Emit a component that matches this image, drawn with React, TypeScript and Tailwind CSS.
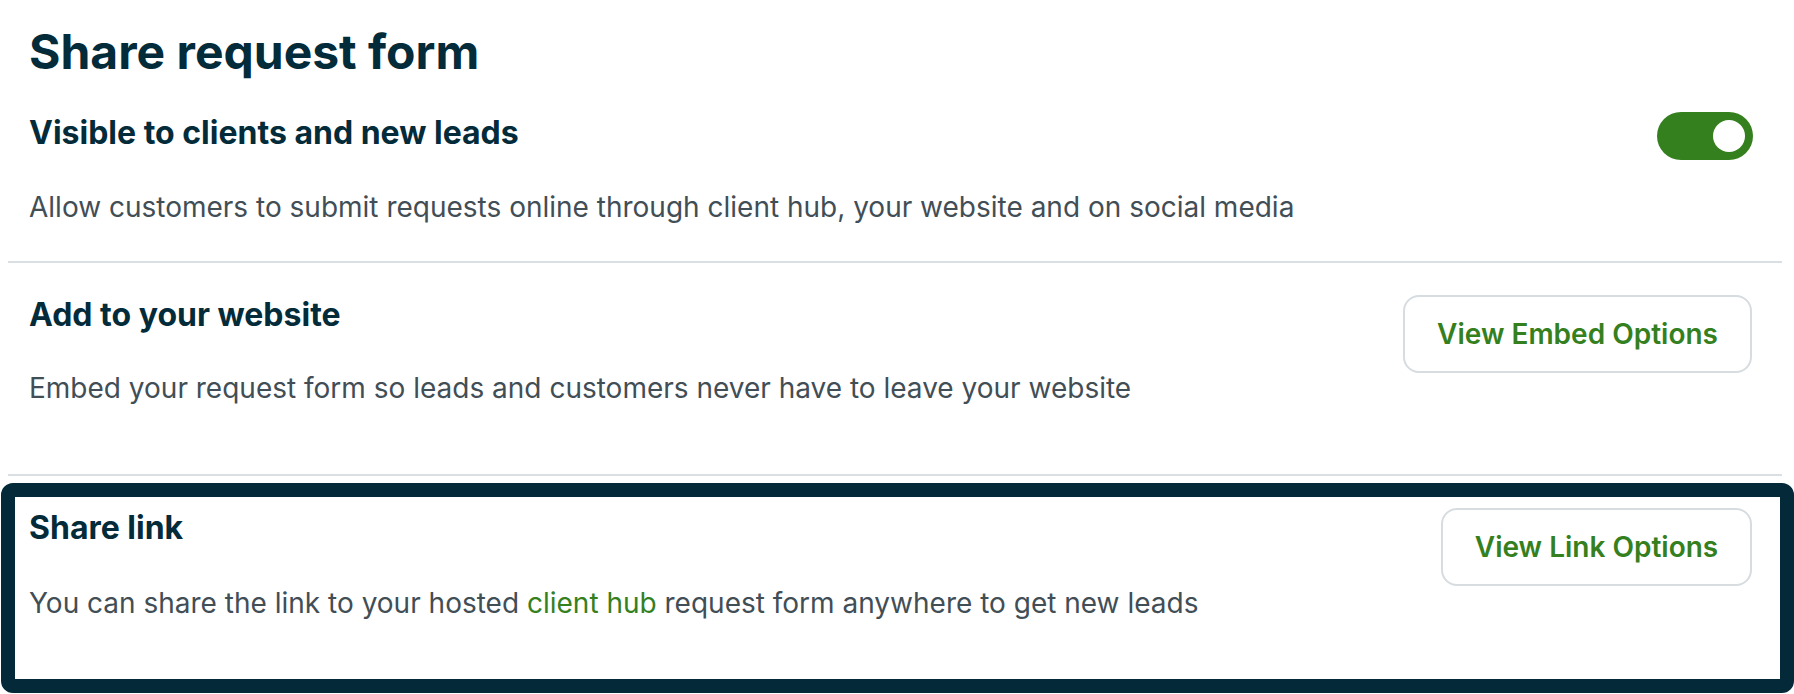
import React from "react";

const GREEN = "#35801e";

function Toggle() {
  return (
    <div className="flex h-[48px] w-[96px] shrink-0 items-center justify-end rounded-full bg-[#35801e] pr-[8px]">
      <div className="h-[32px] w-[32px] rounded-full bg-white" />
    </div>
  );
}

function OptionButton({ label, width }: { label: string; width: string }) {
  return (
    <button
      className={`flex h-[78px] ${width} shrink-0 items-center justify-center rounded-[16px] border-2 border-[#d6dce0] bg-white text-[28px] font-semibold leading-[34px] text-[#35801e]`}
    >
      {label}
    </button>
  );
}

export default function App() {
  return (
    <div
      className="h-[694px] w-[1794px] overflow-hidden bg-white"
      style={{ fontFamily: "Inter, 'Noto Sans', sans-serif" }}
    >
      <div className="pl-[8px] pr-[12px]">
        {/* Section 1 */}
        <div className="pl-[21px] pr-[29px] pt-[23px] pb-[37px]">
          <h1 className="text-[48px] font-bold leading-[58px] text-[#032b3a]">
            Share request form
          </h1>
          <div className="mt-[31px] flex items-start justify-between">
            <h2 className="pt-px text-[32px] font-bold leading-[40px] text-[#032b3a]">
              Visible to clients and new leads
            </h2>
            <Toggle />
          </div>
          <p className="mt-[30px] text-[28px] leading-[34px] text-[#424e56]">
            Allow customers to submit requests online through client hub, your website and on social media
          </p>
        </div>
        <div className="h-[2px] bg-[#dadfe3]" />

        {/* Section 2 */}
        <div className="flex items-start justify-between pl-[21px] pr-[30px] pt-[32px] pb-[69px]">
          <div>
            <h2 className="text-[32px] font-bold leading-[40px] text-[#032b3a]">
              Add to your website
            </h2>
            <p className="mt-[36px] text-[28px] leading-[34px] text-[#424e56]">
              Embed your request form so leads and customers never have to leave your website
            </p>
          </div>
          <OptionButton label="View Embed Options" width="w-[349px]" />
        </div>
        <div className="h-[2px] bg-[#dadfe3]" />
      </div>

      {/* Section 3 (focused) */}
      <div className="ml-px mt-[7px] h-[210px] w-[1793px] rounded-[12px] border-[14px] border-[#042a3a] pl-[14px] pr-[28px] pt-[11px]">
        <div className="flex items-start justify-between">
          <div>
            <h2 className="text-[32px] font-bold leading-[40px] text-[#032b3a]">
              Share link
            </h2>
            <p className="mt-[38px] text-[28px] leading-[34px] text-[#424e56]">
              You can share the link to your hosted{" "}
              <span style={{ color: GREEN }}>client hub</span> request form anywhere to get new leads
            </p>
          </div>
          <OptionButton label="View Link Options" width="w-[311px]" />
        </div>
      </div>
    </div>
  );
}
